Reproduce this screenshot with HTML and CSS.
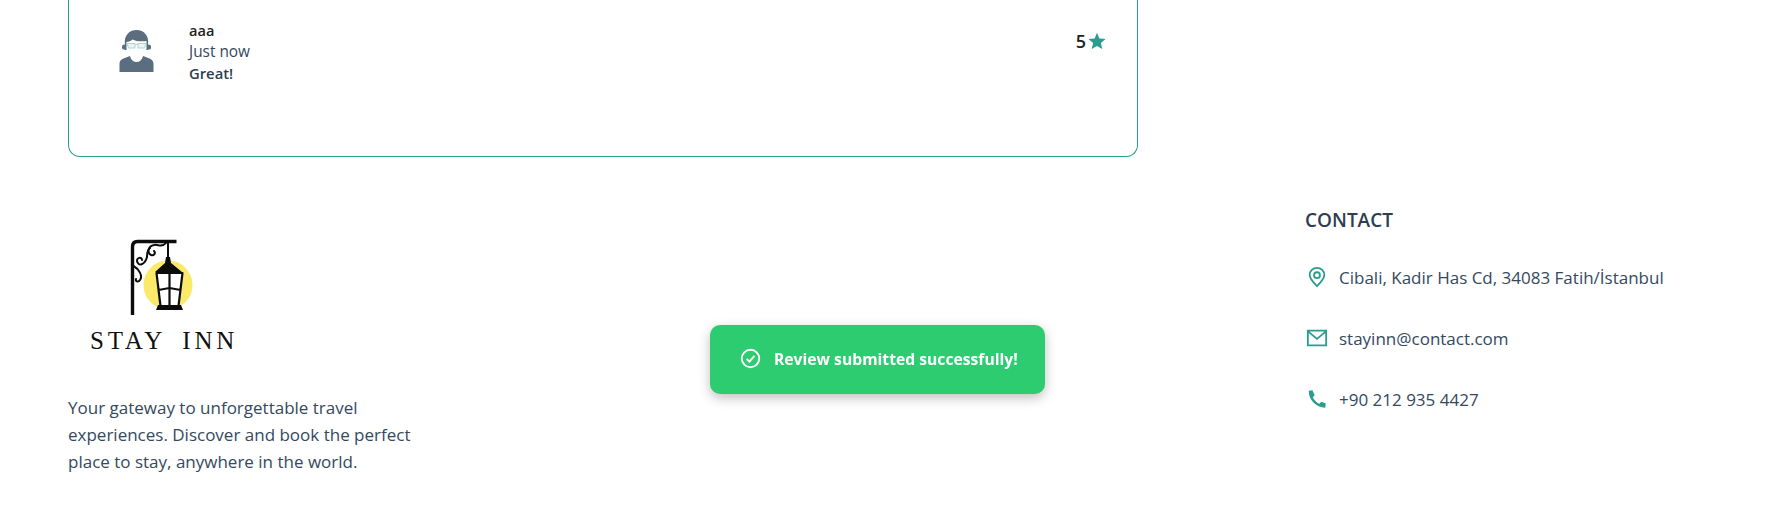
FILE: index.html
```html
<!DOCTYPE html>
<html lang="en">
<head>
    <meta charset="UTF-8">
    <meta name="viewport" content="width=device-width, initial-scale=1.0">
    <title>Stay Inn | Reviews</title>
    <link rel="stylesheet" href="styles.css">
</head>
<body>
    <section class="reviews">
        <div class="review">
            <svg class="avatar" viewBox="0 0 35 42" aria-hidden="true">
                <path class="avatar-dark" d="M0.500 42V34C0.500 30 3.500 28.500 7 27.500L11 26C12 30 14.500 32 17.500 32C20.500 32 23 30 24 26L28 27.500C31.500 28.500 34.500 30 34.500 34V42Z"/>
                <circle class="avatar-dark" cx="5.500" cy="17" r="2.600"/>
                <circle class="avatar-dark" cx="29.500" cy="17" r="2.600"/>
                <path class="avatar-dark" d="M6 15C4.500 6 10 0 17.500 0C25 0 30.500 6 29 15V20H6Z"/>
                <path class="avatar-face" d="M7.500 12C10 12 12 11 13.500 9.500C17 11.500 23 11.500 27.500 11V18.500C27.500 24 22 28.500 17.500 28.500C13 28.500 7.500 24 7.500 18.500Z"/>
                <path class="avatar-glasses" d="M8 13.500H16V18H9.500ZM19 13.500H27L25.500 18H19ZM16 14.500H19"/>
            </svg>
            <div class="review-body">
                <div class="review-name">aaa</div>
                <div class="review-time">Just now</div>
                <div class="review-text">Great!</div>
            </div>
            <div class="review-score">
                <span>5</span>
                <svg class="star" viewBox="0 0 24 24" aria-hidden="true"><path d="M12 1L15.200 8.500L23.400 9.300L17.200 14.800L19 22.800L12 18.600L5 22.800L6.800 14.800L0.600 9.300L8.800 8.500Z"/></svg>
            </div>
        </div>
    </section>

    <footer class="site-footer">
        <div class="brand">
            <div class="logo">
                <svg class="lantern" viewBox="0 0 80 90" aria-hidden="true">
                    <circle class="lamp-glow" cx="48" cy="55" r="24.500"/>
                    <path class="iron" stroke-width="3.400" d="M12.500 85V17C12.500 13 14.500 11.500 17.500 11.500H56.500"/>
                    <path class="iron-thin" d="M48 11V28"/>
                    <path class="iron-thin" d="M46 13C42 18 38 14 34 15C28 16 27 23 31 25C34 26 36 23 34 21"/>
                    <path class="iron-thin" d="M30 18C27 20 27 24 27 27C25 35 18 37 17 31C17 27 22 27 22 30"/>
                    <path class="iron-thin" d="M13.500 36C19 39 23 46 20 50C18 53 15 51 16 49"/>
                    <path class="iron-fill" d="M46 27H50L51 33L62 42H35L45 33Z"/>
                    <path class="lamp-glass" d="M36.500 43H62.500L58.500 76H40.500Z"/>
                    <path class="iron" stroke-width="2.200" d="M36.500 43H62.500L58.500 76H40.500ZM49.500 43V76M38.500 60L49.500 58L60.500 60"/>
                    <path class="iron-fill" d="M38 75H61L63 80H36Z"/>
                </svg>
                <div class="logo-name">STAY INN</div>
            </div>
            <p class="brand-text">Your gateway to unforgettable travel experiences. Discover and book the perfect place to stay, anywhere in the world.</p>
        </div>
        <div class="contact">
            <h4>CONTACT</h4>
            <ul>
                <li>
                    <svg class="contact-icon" viewBox="0 0 24 24" aria-hidden="true"><path d="M12 22C7.500 17.500 4 13.800 4 9.800C4 5.300 7.600 2 12 2C16.400 2 20 5.300 20 9.800C20 13.800 16.500 17.500 12 22Z"/><circle cx="12" cy="10" r="3.200"/></svg>
                    Cibali, Kadir Has Cd, 34083 Fatih/İstanbul
                </li>
                <li>
                    <svg class="contact-icon" viewBox="0 0 24 24" aria-hidden="true"><path d="M2 4H22V20H2ZM2.500 5L12 13L21.500 5"/></svg>
                    stayinn@contact.com
                </li>
                <li>
                    <svg class="contact-icon" viewBox="0 0 24 24" aria-hidden="true"><path class="solid" d="M7 2.500L3 3C2.800 12.800 10.700 21.200 21 21.500L21.600 17L16.800 15L14.500 17.300C11.500 15.800 8.800 13 7.400 10L9.500 7.800Z"/></svg>
                    +90 212 935 4427
                </li>
            </ul>
        </div>
    </footer>

    <div class="toast">
        <svg class="toast-icon" viewBox="0 0 24 24" aria-hidden="true"><circle cx="12" cy="12" r="10"/><path d="M7.500 12.500L10.800 15.500L16.500 9"/></svg>
        <span>Review submitted successfully!</span>
    </div>
</body>
</html>
```

FILE: styles.css
```css
body { font-family: "Open Sans", "Noto Sans", sans-serif; margin: 0; height: 505px; overflow: hidden; background: white; color: #2c3e50; }

.reviews { padding: 0 68px; }
.review { width: 1068px; height: 156px; border: 1px solid #2a9d8f; border-top: none; border-radius: 0 0 12px 12px; display: flex; align-items: flex-start; }
.avatar { width: 35px; height: 42px; margin: 30px 0 0 50px; flex: none; }
.avatar-dark { fill: #5a6e80; }
.avatar-face { fill: white; }
.avatar-glasses { fill: #e6f6f3; stroke: #a5dcd2; stroke-width: 1; }
.review-body { margin: 20px 0 0 35px; font-size: 15.400px; line-height: 21px; flex: 1; }
.review-name { font-size: 14.600px; font-weight: 600; color: #222; }
.review-time { color: #34495e; }
.review-text { font-size: 14.800px; font-weight: 600; margin-top: 1px; }
.review-score { display: flex; align-items: center; gap: 2px; margin: 30px 31px 0 0; font-size: 18px; font-weight: 600; line-height: 22px; color: #222; }
.star { width: 18px; height: 18px; margin-top: -1px; fill: #2a9d8f; }

.site-footer { display: grid; grid-template-columns: 1237px 1fr; padding-left: 68px; }
.logo { width: 146px; margin: 73px 0 0 22px; }
.lantern { display: block; width: 80px; height: 90px; margin-left: 30px; }
.logo-name { font-family: "Liberation Serif", serif; font-size: 25px; line-height: 26px; letter-spacing: 3.800px; word-spacing: 7px; white-space: nowrap; color: #111; margin-top: 8px; }
.brand-text { width: 345px; margin: 40px 0 0; font-size: 17px; line-height: 27px; color: #34495e; }

.contact { padding-top: 50px; }
.contact h4 { margin: 0 0 21px; font-size: 19px; line-height: 26px; font-weight: 600; color: #2c3e50; }
.contact ul { list-style: none; margin: 0; padding: 0 0 0 1px; }
.contact li { display: flex; align-items: center; gap: 11px; height: 46px; margin-top: 15px; font-size: 17px; color: #34495e; }
.contact li:first-child { margin-top: 0; }
.contact-icon { width: 22px; height: 22px; flex: none; fill: none; stroke: #2a9d8f; stroke-width: 2; }
.contact-icon .solid { fill: #2a9d8f; stroke: none; }

.toast { position: fixed; left: 710px; top: 325px; width: 335px; height: 69px; box-sizing: border-box; padding: 0 0 2px 30px; display: flex; align-items: center; gap: 13px; background: #2ecc71; color: white; border-radius: 10px; box-shadow: 0 4px 12px rgba(0,0,0,0.25); font-size: 15.700px; font-weight: 700; }
.toast-icon { width: 21px; height: 21px; fill: none; stroke: white; stroke-width: 2.200; flex: none; }

.lamp-glow { fill: #fbe96a; }
.lamp-glass { fill: white; }
.iron { fill: none; stroke: #0c0c0c; stroke-linejoin: round; }
.iron-thin { fill: none; stroke: #0c0c0c; stroke-width: 2; stroke-linecap: round; }
.iron-fill { fill: #0c0c0c; }
```
